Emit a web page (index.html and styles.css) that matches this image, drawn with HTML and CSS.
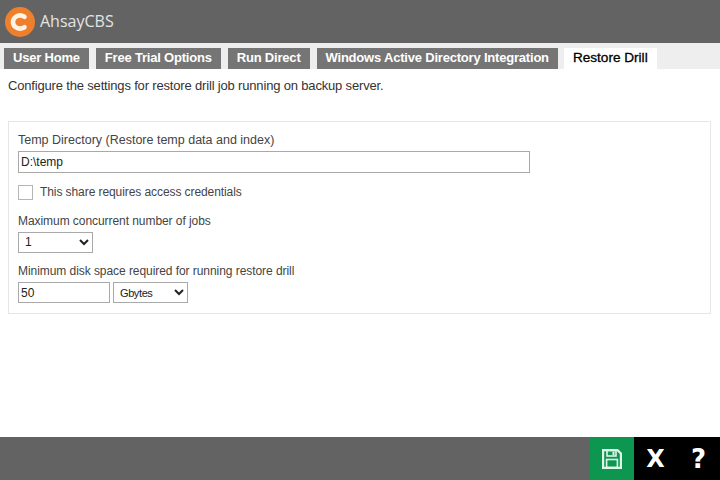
FILE: index.html
```html
<!DOCTYPE html>
<html lang="en">
<head>
<meta charset="utf-8">
<title>AhsayCBS</title>
<link rel="stylesheet" href="styles.css">
</head>
<body>
<div class="app">
  <header class="top">
    <svg class="logo" width="30" height="30" viewBox="0 0 30 30">
      <circle cx="15" cy="15" r="15" fill="#ee7f2d"/>
      <path d="M19.5 9.8 C17 8.3 13.5 8 11 9.6 C8.8 11 8 13 8 15 C8 17 8.8 19 11 20.4 C13.5 22 17 21.7 19.5 20.2" fill="none" stroke="#fff3e4" stroke-width="4.6" stroke-linecap="round"/>
    </svg>
    <span class="brand">AhsayCBS</span>
  </header>
  <nav class="tabs">
    <a class="tab">User Home</a>
    <a class="tab">Free Trial Options</a>
    <a class="tab">Run Direct</a>
    <a class="tab">Windows Active Directory Integration</a>
    <a class="tab active">Restore Drill</a>
  </nav>
  <main class="content">
    <p class="intro">Configure the settings for restore drill job running on backup server.</p>
    <section class="panel">
      <label class="label temp">Temp Directory (Restore temp data and index)</label>
      <input class="field wide" type="text" value="D:\temp">
      <div class="check-row">
        <span class="check"></span>
        <span class="check-text">This share requires access credentials</span>
      </div>
      <label class="label jobs">Maximum concurrent number of jobs</label>
      <select class="field select-jobs"><option>1</option></select>
      <label class="label second">Minimum disk space required for running restore drill</label>
      <div class="inline">
        <input class="field short" type="text" value="50">
        <select class="field select-unit"><option>Gbytes</option></select>
      </div>
    </section>
  </main>
  <footer class="bottom">
    <button class="action save" aria-label="Save">
      <svg width="20" height="20" viewBox="0 0 20 20">
        <path fill="none" stroke="#dff5e7" stroke-width="2.2" d="M1.1 1.1H15.5L18.9 4.5V18.9H1.1Z"/>
        <rect x="5" y="1.5" width="9" height="5.5" fill="none" stroke="#dff5e7" stroke-width="1.6"/>
        <rect x="10.5" y="2.6" width="2" height="3.4" fill="#dff5e7"/>
        <rect x="4.6" y="10.5" width="10.8" height="8" fill="none" stroke="#dff5e7" stroke-width="1.6"/>
      </svg>
    </button>
    <button class="action dark">X</button>
    <button class="action dark help">?</button>
  </footer>
</div>
</body>
</html>
```
FILE: styles.css
```css
* { box-sizing: border-box; }
html, body { margin: 0; padding: 0; }
body { font-family: "Liberation Sans", Arial, sans-serif; background: #fff; color: #333; }
.app { width: 720px; height: 480px; display: flex; flex-direction: column; overflow: hidden; }
.top { height: 43px; background: #636363; display: flex; align-items: center; padding-left: 5px; flex: none; }
.logo { display: block; margin-top: 1px; }
.brand { font-family: "Open Sans", sans-serif; font-size: 16px; color: #e4e4e4; margin-left: 5px; margin-top: -1px; }
.tabs { height: 26px; background: #eeeeee; flex: none; display: flex; gap: 7px; padding: 5px 0 0 4px; }
.tab { height: 21px; background: #757575; color: #fff; font-size: 13px; letter-spacing: -0.2px; font-weight: bold; line-height: 19px; padding: 0 9px; white-space: nowrap; }
.tab.active { background: #fff; color: #000; font-weight: normal; font-size: 13.6px; letter-spacing: 0; -webkit-text-stroke: 0.3px #000; margin-left: -1px; }
.content { flex: 1; padding: 0 8px; }
.intro { margin: 8px 0 0; font-size: 13px; letter-spacing: -0.17px; line-height: 17px; color: #333; }
.panel { margin: 27px 1px 0 0; border: 1px solid #e6e6e6; height: 193px; padding: 10px 9px; display: flex; flex-direction: column; align-items: flex-start; }
.label { font-size: 12px; line-height: 16px; color: #444; }
.temp { font-size: 12.5px; }
.field { font-family: "Liberation Sans", Arial, sans-serif; font-size: 12px; color: #222; border: 1px solid #a9a9a9; background: #fff; border-radius: 0; height: 22px; padding: 0 2px; margin: 0; outline: none; }
.wide { width: 512px; margin-top: 3px; }
.check-row { display: flex; align-items: center; gap: 7px; margin-top: 12px; height: 15px; }
.check { width: 15px; height: 15px; border: 1px solid #b5b5b5; background: #fff; }
.check-text { font-size: 12px; letter-spacing: -0.08px; color: #444; }
.jobs { margin-top: 13px; letter-spacing: -0.06px; }
.select-jobs { width: 75px; margin-top: 3px; padding-left: 2px; }
.second { margin-top: 10px; letter-spacing: -0.06px; }
.inline { display: flex; gap: 3px; margin-top: 3px; }
.short { width: 92px; height: 21px; }
.select-unit { width: 75px; height: 21px; padding-left: 2px; font-size: 11px; letter-spacing: -0.4px; }
.bottom { height: 43px; flex: none; background: #636363; display: flex; justify-content: flex-end; }
.action { width: 43px; height: 43px; border: 0; padding: 0; margin: 0; display: flex; align-items: center; justify-content: center; font-family: "DejaVu Sans", sans-serif; font-weight: bold; font-size: 24px; color: #fff; }
.save { background: #0d9650; width: 44px; }
.dark { background: #000; }
.help { font-size: 26px; }
```
